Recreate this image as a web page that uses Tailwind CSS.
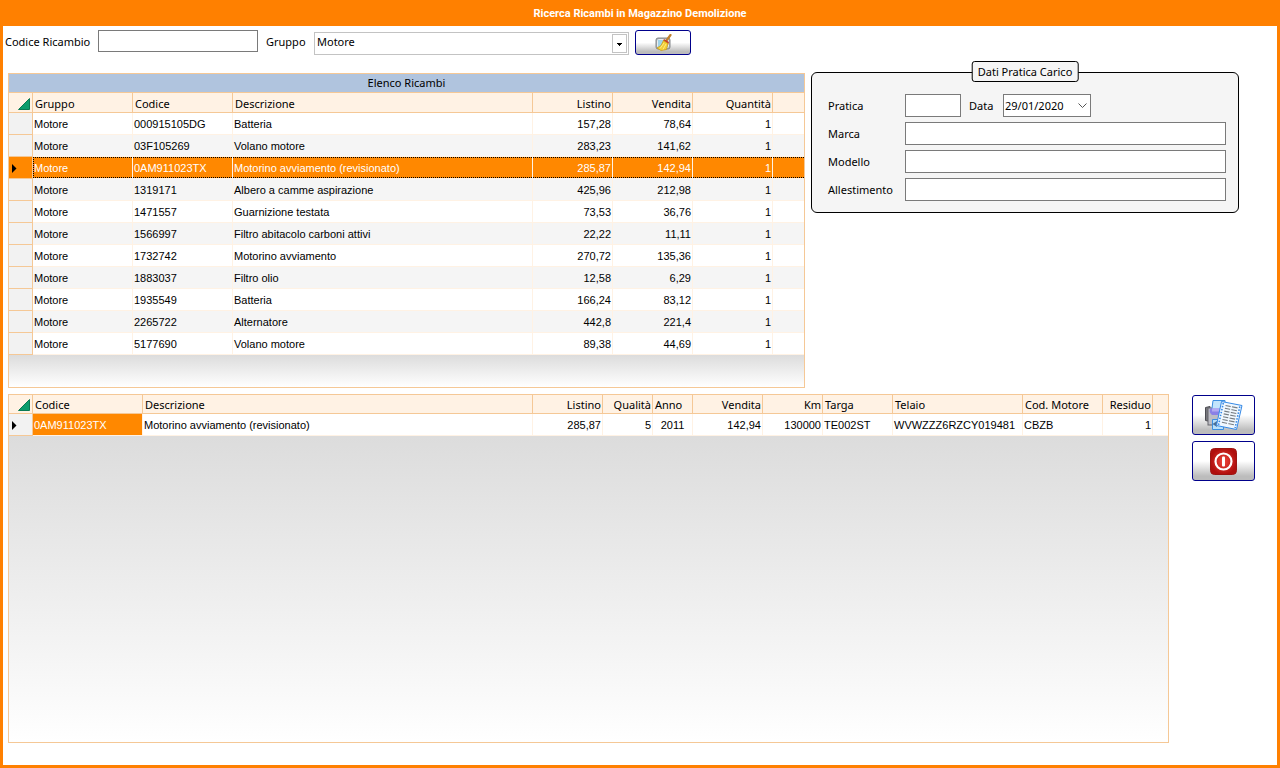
<!DOCTYPE html>
<html lang="it">
<head>
    <meta charset="UTF-8">
    <meta name="viewport" content="width=device-width, initial-scale=1.0">
    <title>Ricerca Ricambi in Magazzino Demolizione</title>

    <script src="https://cdn.jsdelivr.net/npm/@tailwindcss/browser@4"></script>
</head>
<body class="flex flex-col min-h-screen bg-white border-3 border-t-0 border-[#ff8000] text-xs text-black font-['Noto_Sans','Open_Sans',sans-serif]">

    <h1 class="h-[26px] pt-1 bg-[#ff8000] text-center text-[11px] leading-5 font-bold text-white font-[Roboto,sans-serif]">Ricerca Ricambi in Magazzino Demolizione</h1>

    <!-- Search bar -->
    <form class="flex items-start pt-1 pl-[2px]">
        <label for="codice" class="w-[93px] leading-6 text-[11px]">Codice Ricambio</label>
        <input id="codice" type="text" class="w-40 h-[22px] px-1 border border-[#7a7a7a]">
        <label for="gruppo" class="w-12 ml-2 leading-6 text-[11px]">Gruppo</label>
        <div class="relative w-[315px] mt-[2px]">
            <select id="gruppo" class="appearance-none w-full h-[23px] pl-[2px] pb-[2px] border border-[#c3c3c3] bg-white text-[11px]">
                <option>Motore</option>
            </select>
            <svg class="absolute right-[2px] top-[2px] pointer-events-none" width="15" height="19" viewBox="0 0 15 19">
                <rect x=".5" y=".5" width="14" height="18" fill="#fff" stroke="#c3c3c3"/>
                <path d="M5 9h5v1H9v1H8v1H7v-1H6v-1H5z"/>
            </svg>
        </div>
        <button type="button" aria-label="Pulisci" class="flex items-center justify-center w-14 h-[25px] ml-[6px] border border-[#00008b] rounded-[3px] bg-linear-to-b from-white from-50% via-[#dedede] via-70% to-[#bcbcbc] to-90%">
            <svg width="17" height="17" viewBox="0 0 17 17">
                <rect x="1" y="4" width="14" height="11" rx="2" fill="#a9adb0" stroke="#84888b"/>
                <rect x="2.500" y="5.500" width="11" height="8" rx="1" fill="#9fd3e8" stroke="#e8edf0"/>
                <path d="M15.500 1 11.500 6.500" stroke="#c0812e" stroke-width="2.200" stroke-linecap="round"/>
                <path d="m9 5 5 3-1 3-5-4z" fill="#c9382e"/>
                <path d="M8.500 6.500 13 9.500 11.500 15.500 6 16.500 2 14 6 11.500z" fill="#f3cf35" stroke="#c79a12" stroke-width=".7"/>
                <path d="m9 9-4 5.500M11 10l-3 5.500" stroke="#fff19a" stroke-width=".8"/>
            </svg>
        </button>
    </form>

    <div class="flex items-start gap-[6px] mt-[18px] pl-[5px] pr-[38px]">
        <!-- Parts list -->
        <div class="flex-1 flex flex-col border border-[#f5c896]">
            <table class="w-full table-fixed border-separate border-spacing-0">
                <caption class="h-[19px] border-b border-[#f5c896] bg-[#b0c4de] text-[11px] leading-[18px]">Elenco Ricambi</caption>
                <colgroup>
                    <col class="w-6"><col class="w-[100px]"><col class="w-[100px]"><col>
                    <col class="w-20"><col class="w-20"><col class="w-20"><col class="w-[31px]">
                </colgroup>
                <thead>
                    <tr class="h-5 bg-[#fff2e4] text-left text-[11px] leading-[17px] *:border-r *:border-b *:border-[#f5c896] *:px-px *:pt-[2px] *:font-normal">
                        <th aria-label="Seleziona tutto"><svg class="ml-auto mr-px" width="12" height="12" viewBox="0 0 12 12"><path d="M11.500.5v11H.5z" fill="#0c9c6c" stroke="#087a52"/></svg></th>
                        <th class="pl-[2px]!">Gruppo</th>
                        <th class="pl-[2px]!">Codice</th>
                        <th class="pl-[2px]!">Descrizione</th>
                        <th class="text-right">Listino</th>
                        <th class="text-right">Vendita</th>
                        <th class="text-right">Quantità</th>
                        <th class="border-r-0!"></th>
                    </tr>
                </thead>
                <tbody id="ricambi" class="text-[11px] leading-[19px] font-['Liberation_Sans',Arial,sans-serif]"></tbody>
            </table>
            <div class="h-8 bg-linear-to-b from-[#dcdcdc] to-white"></div>
        </div>

        <!-- Load record -->
        <fieldset class="relative w-[428px] h-[141px] -mt-px pt-[21px] pl-4 border border-black rounded-md bg-[#f5f5f5] text-[11px]">
            <legend class="absolute left-1/2 -translate-x-1/2 -top-3 h-[21px] px-[5px] border border-black rounded-[3px] bg-[#f5f5f5] leading-[19px] whitespace-nowrap">Dati Pratica Carico</legend>
            <div class="grid grid-cols-[77px_321px] gap-y-[5px] items-center leading-[22px]">
                <label for="pratica">Pratica</label>
                <div class="flex items-center">
                    <input id="pratica" type="text" class="w-14 h-[23px] px-1 border border-[#7a7a7a] bg-white">
                    <label for="data" class="w-[34px] ml-2">Data</label>
                    <div class="relative">
                        <input id="data" type="text" value="29/01/2020" class="w-[88px] h-[23px] pl-px border border-[#7a7a7a] bg-white">
                        <svg class="absolute right-1 top-2 pointer-events-none" width="9" height="7" viewBox="0 0 9 7"><path d="m.5 1.500 4 4 4-4" fill="none" stroke="#555"/></svg>
                    </div>
                </div>
                <label for="marca">Marca</label>
                <input id="marca" type="text" class="h-[23px] px-1 border border-[#7a7a7a] bg-white">
                <label for="modello">Modello</label>
                <input id="modello" type="text" class="h-[23px] px-1 border border-[#7a7a7a] bg-white">
                <label for="allestimento">Allestimento</label>
                <input id="allestimento" type="text" class="h-[23px] px-1 border border-[#7a7a7a] bg-white">
            </div>
        </fieldset>
    </div>

    <div class="flex-1 flex gap-[23px] mt-[6px] mb-[22px] pl-[5px] pr-[22px]">
        <!-- Detail of the selected part -->
        <div class="flex-1 flex flex-col border border-[#f5c896]">
            <table class="w-full table-fixed border-separate border-spacing-0 text-[11px]">
                <colgroup>
                    <col class="w-6"><col class="w-[110px]"><col><col class="w-[70px]"><col class="w-[50px]">
                    <col class="w-10"><col class="w-[70px]"><col class="w-[60px]"><col class="w-[70px]">
                    <col class="w-[130px]"><col class="w-20"><col class="w-[50px]"><col class="w-[15px]">
                </colgroup>
                <thead>
                    <tr class="h-[19px] bg-[#fff2e4] text-left leading-[16px] whitespace-nowrap *:border-r *:border-b *:border-[#f5c896] *:px-px *:pt-[2px] *:font-normal">
                        <th aria-label="Seleziona tutto"><svg class="ml-auto mr-px" width="12" height="12" viewBox="0 0 12 12"><path d="M11.500.5v11H.5z" fill="#0c9c6c" stroke="#087a52"/></svg></th>
                        <th class="pl-[2px]!">Codice</th>
                        <th class="pl-[2px]!">Descrizione</th>
                        <th class="text-right">Listino</th>
                        <th class="text-right">Qualità</th>
                        <th class="pl-[2px]!">Anno</th>
                        <th class="text-right">Vendita</th>
                        <th class="text-right">Km</th>
                        <th class="pl-[2px]!">Targa</th>
                        <th class="pl-[2px]!">Telaio</th>
                        <th class="pl-[2px]!">Cod. Motore</th>
                        <th class="text-right">Residuo</th>
                        <th class="border-r-0!"></th>
                    </tr>
                </thead>
                <tbody class="leading-[19px] font-['Liberation_Sans',Arial,sans-serif]">
                    <tr class="h-[22px] bg-white whitespace-nowrap *:border-r *:border-b *:border-[#fff2e4] *:px-px *:pt-px">
                        <th class="border-[#f5c896]! bg-[#f2f2f2]" aria-label="Riga corrente"><svg class="ml-[2px]" width="5" height="9" viewBox="0 0 5 9"><path d="M0 0v9l4.500-4.500z"/></svg></th>
                        <td class="bg-[#ff8800] text-white">0AM911023TX</td>
                        <td>Motorino avviamento (revisionato)</td>
                        <td class="text-right">285,87</td>
                        <td class="text-right">5</td>
                        <td class="text-center">2011</td>
                        <td class="text-right">142,94</td>
                        <td class="text-right">130000</td>
                        <td>TE002ST</td>
                        <td>WVWZZZ6RZCY019481</td>
                        <td>CBZB</td>
                        <td class="text-right">1</td>
                        <td class="border-r-0!"></td>
                    </tr>
                </tbody>
            </table>
            <div class="flex-1 bg-linear-to-b from-[#dcdcdc] to-white"></div>
        </div>

        <div class="flex flex-col gap-[6px] pt-px">
            <button type="button" aria-label="Stampa elenco" class="flex items-center justify-center w-[63px] h-10 border border-[#00008b] rounded-[3px] bg-linear-to-b from-white from-50% via-[#dedede] via-70% to-[#bcbcbc] to-90%">
                <svg width="38" height="32" viewBox="0 0 38 32">
                    <path d="M.5 8.500 5 7.500v15l-4.500-1z" fill="#77777c" stroke="#4c4c52"/>
                    <rect x="3" y="9" width="12" height="17" fill="#bdbdc4" stroke="#66666c"/>
                    <path d="M8 1.500h12V13H6.500z" fill="#c3e5fc" stroke="#3b8ee0"/>
                    <path d="M5 9.500h11v6.500H7q-3-2-2-6.500z" fill="#8b80e6"/>
                    <path d="M7 9.500h9v3H7z" fill="#b3a9f0"/>
                    <path d="M7.500 20.500h11v10h-11z" fill="#b9e0fb" stroke="#3b8ee0"/>
                    <path d="M7.500 25 12 22v6z" fill="#4d6f96"/>
                    <path d="m16.500 2.500 20.500 4-5.500 24-20-4z" fill="#f0f8ff" stroke="#3589e6"/>
                    <path d="m18.300 4-4.700 21.800M34.800 7.500l-4.700 21.500" stroke="#3589e6" stroke-width="1.600" stroke-dasharray="1.500 1.500"/>
                    <path d="m20.500 6.500 12 2.400m-12.600.4 12 2.400m-12.600.4 12 2.400m-12.600.4 12 2.400m-12.600.4 12 2.400m-12.600.4 12 2.400m-12.600.4 12 2.400" stroke="#777d82" stroke-width="1.100"/>
                    <path d="m26.500 7-4.100 19" stroke="#f0f8ff" stroke-width="1.300"/>
                </svg>
            </button>
            <button type="button" aria-label="Esci" class="flex items-center justify-center w-[63px] h-10 border border-[#00008b] rounded-[3px] bg-linear-to-b from-white from-50% via-[#dedede] via-70% to-[#bcbcbc] to-90%">
                <svg width="27" height="27" viewBox="0 0 27 27">
                    <defs>
                        <radialGradient id="rosso"><stop offset="0" stop-color="#f0463c"/><stop offset="1" stop-color="#b00f0d"/></radialGradient>
                    </defs>
                    <rect x=".5" y=".5" width="26" height="26" rx="4" fill="url(#rosso)" stroke="#9c1512"/>
                    <circle cx="13.500" cy="13.500" r="8" fill="none" stroke="#fff" stroke-width="2.200"/>
                    <rect x="12" y="8.500" width="3" height="10" rx="1" fill="#fff"/>
                </svg>
            </button>
        </div>
    </div>

    <script>
        const ricambi = [
            ['000915105DG', 'Batteria', '157,28', '78,64'],
            ['03F105269', 'Volano motore', '283,23', '141,62'],
            ['0AM911023TX', 'Motorino avviamento (revisionato)', '285,87', '142,94'],
            ['1319171', 'Albero a camme aspirazione', '425,96', '212,98'],
            ['1471557', 'Guarnizione testata', '73,53', '36,76'],
            ['1566997', 'Filtro abitacolo carboni attivi', '22,22', '11,11'],
            ['1732742', 'Motorino avviamento', '270,72', '135,36'],
            ['1883037', 'Filtro olio', '12,58', '6,29'],
            ['1935549', 'Batteria', '166,24', '83,12'],
            ['2265722', 'Alternatore', '442,8', '221,4'],
            ['5177690', 'Volano motore', '89,38', '44,69']
        ];
        const selected = 2;

        // Row marker and dotted focus frame of the selected row
        const marker = `
            <svg class="ml-[2px]" width="5" height="9" viewBox="0 0 5 9"><path d="M0 0v9l4.500-4.500z"/></svg>
            <span class="absolute top-0 bottom-px left-6 right-0 border-y border-l border-dotted border-black"></span>
        `;

        const body = document.getElementById('ricambi');
        ricambi.forEach(([codice, descrizione, listino, vendita], i) => {
            const tr = document.createElement('tr');
            tr.className = "h-[22px] whitespace-nowrap *:border-r *:border-b *:border-[#fff2e4] *:px-px *:pt-px " +
                (i === selected ? "relative bg-[#ff8800] text-white" : i % 2 ? "bg-[#f5f5f5]" : "bg-white");
            tr.innerHTML = `
                <th class="border-[#f5c896]! ${i === selected ? '' : 'bg-[#f2f2f2]'}">${i === selected ? marker : ''}</th>
                <td>Motore</td>
                <td>${codice}</td>
                <td>${descrizione}</td>
                <td class="text-right">${listino}</td>
                <td class="text-right">${vendita}</td>
                <td class="text-right">1</td>
                <td class="border-r-0!"></td>
            `;
            body.appendChild(tr);
        });
    </script>
</body>
</html>
